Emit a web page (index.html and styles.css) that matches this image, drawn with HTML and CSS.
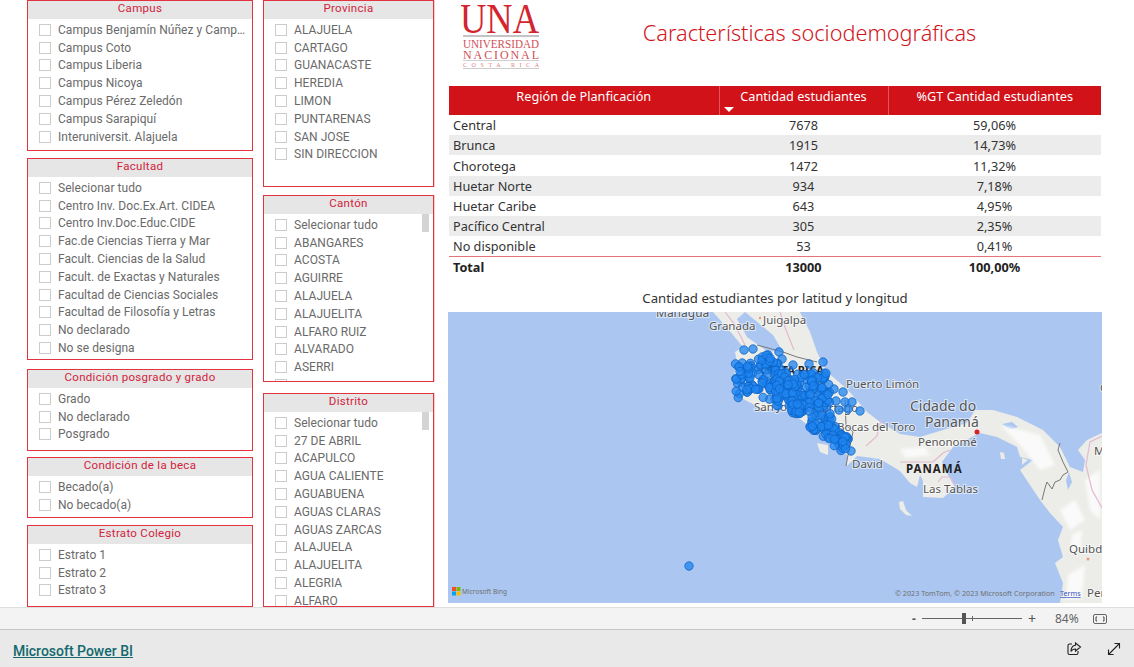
FILE: index.html
```html
<!DOCTYPE html>
<html lang="en">

<head>
  <meta charset="UTF-8">
  <title>Características sociodemográficas</title>
  <link rel="stylesheet" href="styles.css">
</head>

<body>
  <div class="report">
    <!-- Slicers, first column -->
    <div class="slicer-col col-left">
      <div class="slicer h-campus">
        <div class="slicer-title">Campus</div>
        <ul class="slicer-list">
          <li><span class="box"></span><span class="lbl">Campus Benjamín Núñez y Campus Omar Dengo</span></li>
          <li><span class="box"></span><span class="lbl">Campus Coto</span></li>
          <li><span class="box"></span><span class="lbl">Campus Liberia</span></li>
          <li><span class="box"></span><span class="lbl">Campus Nicoya</span></li>
          <li><span class="box"></span><span class="lbl">Campus Pérez Zeledón</span></li>
          <li><span class="box"></span><span class="lbl">Campus Sarapiquí</span></li>
          <li><span class="box"></span><span class="lbl">Interuniversit. Alajuela</span></li>
        </ul>
      </div>
      <div class="slicer h-facultad">
        <div class="slicer-title">Facultad</div>
        <ul class="slicer-list">
          <li><span class="box"></span><span class="lbl">Selecionar tudo</span></li>
          <li><span class="box"></span><span class="lbl">Centro Inv. Doc.Ex.Art. CIDEA</span></li>
          <li><span class="box"></span><span class="lbl">Centro Inv.Doc.Educ.CIDE</span></li>
          <li><span class="box"></span><span class="lbl">Fac.de Ciencias Tierra y Mar</span></li>
          <li><span class="box"></span><span class="lbl">Facult. Ciencias de la Salud</span></li>
          <li><span class="box"></span><span class="lbl">Facult. de Exactas y Naturales</span></li>
          <li><span class="box"></span><span class="lbl">Facultad de Ciencias Sociales</span></li>
          <li><span class="box"></span><span class="lbl">Facultad de Filosofía y Letras</span></li>
          <li><span class="box"></span><span class="lbl">No declarado</span></li>
          <li><span class="box"></span><span class="lbl">No se designa</span></li>
        </ul>
      </div>
      <div class="slicer h-posgrado">
        <div class="slicer-title">Condición posgrado y grado</div>
        <ul class="slicer-list">
          <li><span class="box"></span><span class="lbl">Grado</span></li>
          <li><span class="box"></span><span class="lbl">No declarado</span></li>
          <li><span class="box"></span><span class="lbl">Posgrado</span></li>
        </ul>
      </div>
      <div class="slicer h-beca">
        <div class="slicer-title">Condición de la beca</div>
        <ul class="slicer-list">
          <li><span class="box"></span><span class="lbl">Becado(a)</span></li>
          <li><span class="box"></span><span class="lbl">No becado(a)</span></li>
        </ul>
      </div>
      <div class="slicer h-estrato">
        <div class="slicer-title">Estrato Colegio</div>
        <ul class="slicer-list">
          <li><span class="box"></span><span class="lbl">Estrato 1</span></li>
          <li><span class="box"></span><span class="lbl">Estrato 2</span></li>
          <li><span class="box"></span><span class="lbl">Estrato 3</span></li>
        </ul>
      </div>
    </div>

    <!-- Slicers, second column -->
    <div class="slicer-col col-right">
      <div class="slicer h-provincia">
        <div class="slicer-title">Provincia</div>
        <ul class="slicer-list">
          <li><span class="box"></span><span class="lbl">ALAJUELA</span></li>
          <li><span class="box"></span><span class="lbl">CARTAGO</span></li>
          <li><span class="box"></span><span class="lbl">GUANACASTE</span></li>
          <li><span class="box"></span><span class="lbl">HEREDIA</span></li>
          <li><span class="box"></span><span class="lbl">LIMON</span></li>
          <li><span class="box"></span><span class="lbl">PUNTARENAS</span></li>
          <li><span class="box"></span><span class="lbl">SAN JOSE</span></li>
          <li><span class="box"></span><span class="lbl">SIN DIRECCION</span></li>
        </ul>
      </div>
      <div class="slicer h-canton">
        <div class="slicer-title">Cantón</div>
        <div class="scroll-thumb"></div>
        <ul class="slicer-list">
          <li><span class="box"></span><span class="lbl">Selecionar tudo</span></li>
          <li><span class="box"></span><span class="lbl">ABANGARES</span></li>
          <li><span class="box"></span><span class="lbl">ACOSTA</span></li>
          <li><span class="box"></span><span class="lbl">AGUIRRE</span></li>
          <li><span class="box"></span><span class="lbl">ALAJUELA</span></li>
          <li><span class="box"></span><span class="lbl">ALAJUELITA</span></li>
          <li><span class="box"></span><span class="lbl">ALFARO RUIZ</span></li>
          <li><span class="box"></span><span class="lbl">ALVARADO</span></li>
          <li><span class="box"></span><span class="lbl">ASERRI</span></li>
          <li><span class="box"></span></li>
        </ul>
      </div>
      <div class="slicer h-distrito">
        <div class="slicer-title">Distrito</div>
        <div class="scroll-thumb"></div>
        <ul class="slicer-list">
          <li><span class="box"></span><span class="lbl">Selecionar tudo</span></li>
          <li><span class="box"></span><span class="lbl">27 DE ABRIL</span></li>
          <li><span class="box"></span><span class="lbl">ACAPULCO</span></li>
          <li><span class="box"></span><span class="lbl">AGUA CALIENTE</span></li>
          <li><span class="box"></span><span class="lbl">AGUABUENA</span></li>
          <li><span class="box"></span><span class="lbl">AGUAS CLARAS</span></li>
          <li><span class="box"></span><span class="lbl">AGUAS ZARCAS</span></li>
          <li><span class="box"></span><span class="lbl">ALAJUELA</span></li>
          <li><span class="box"></span><span class="lbl">ALAJUELITA</span></li>
          <li><span class="box"></span><span class="lbl">ALEGRIA</span></li>
          <li><span class="box"></span><span class="lbl">ALFARO</span></li>
        </ul>
      </div>
    </div>

    <!-- Logo, title, table and map -->
    <div class="main">
      <div class="head">
        <svg class="logo" width="80" height="68" viewBox="0 0 80 68">
          <text x="-1" y="29" class="logo-una" textLength="79" lengthAdjust="spacingAndGlyphs">UNA</text>
          <rect x="2" y="31" width="76" height="2" fill="#c4c4c4"></rect>
          <text x="2" y="44" class="logo-uni" textLength="76" lengthAdjust="spacingAndGlyphs">UNIVERSIDAD</text>
          <text x="2" y="55" class="logo-uni" textLength="76">NACIONAL</text>
          <rect x="2" y="56" width="76" height="1" fill="#d0d0d0"></rect>
          <text x="2" y="63" class="logo-cr" textLength="76">COSTA RICA</text>
          <rect x="2" y="64" width="76" height="1" fill="#cccccc"></rect>
        </svg>
        <h1>Características sociodemográficas</h1>
      </div>

      <table class="region-table">
        <thead>
          <tr>
            <th class="c1">Región de Planficación</th>
            <th class="c2">Cantidad estudiantes<span class="sort-arrow"></span></th>
            <th class="c3">%GT Cantidad estudiantes</th>
          </tr>
        </thead>
        <tbody>
          <tr><td>Central</td><td>7678</td><td>59,06%</td></tr>
          <tr class="odd"><td>Brunca</td><td>1915</td><td>14,73%</td></tr>
          <tr class="tall"><td>Chorotega</td><td>1472</td><td>11,32%</td></tr>
          <tr class="odd"><td>Huetar Norte</td><td>934</td><td>7,18%</td></tr>
          <tr><td>Huetar Caribe</td><td>643</td><td>4,95%</td></tr>
          <tr class="odd"><td>Pacífico Central</td><td>305</td><td>2,35%</td></tr>
          <tr><td>No disponible</td><td>53</td><td>0,41%</td></tr>
        </tbody>
        <tfoot>
          <tr><td>Total</td><td>13000</td><td>100,00%</td></tr>
        </tfoot>
      </table>

      <div class="map-title">Cantidad estudiantes por latitud y longitud</div>

      <svg id="map" class="map" width="654" height="291" viewBox="448 312 654 291">
        <defs>
          <filter id="soft" x="-5%" y="-5%" width="110%" height="110%">
            <feGaussianBlur stdDeviation="0.7"></feGaussianBlur>
          </filter>
          <filter id="softer" x="-20%" y="-20%" width="140%" height="140%">
            <feGaussianBlur stdDeviation="1.6"></feGaussianBlur>
          </filter>
        </defs>
        <rect x="448" y="312" width="654" height="291" fill="#abc7f1"></rect>
        <!-- Land -->
        <g filter="url(#soft)">
          <path class="land" d="M713 312 L728 329 L743 347 L735 352 L737 362 L733 379 L743 399 L763 409 L787 409 L800 419 L813 429 L823 439 L833 445 L847 455 L847 466 L857 456 L880 459 L900 471 L910 483 L917 487 L920 475 L923 481 L923 497 L943 498 L955 487 L948 475 L942 462 L953 447 L972 437 L980 433 L997 437 L1017 447 L1020 457 L1033 460 L1020 470 L1040 500 L1050 513 L1063 527 L1058 540 L1063 557 L1055 563 L1063 583 L1060 603 L1102 603 L1102 433 L1087 440 L1078 450 L1085 460 L1083 472 L1070 467 L1060 447 L1043 430 L1017 417 L993 410 L975 410 L967 423 L943 430 L920 437 L900 434 L880 422 L867 412 L847 389 L827 372 L817 352 L810 332 L800 312 Z"></path>
          <path class="land" d="M817 443 L828 445 L828 455 L820 452 Z"></path>
          <path class="land" d="M899 502 L903 501 L906 510 L912 516 L906 515 L900 509 Z"></path>
          <path class="land" d="M1000 452 L1004 453 L1005 459 L1001 459 Z"></path>
          <path class="land" d="M1022 458 L1028 460 L1022 465 Z"></path>
          <path class="lake" d="M745 312 L773 335 L782 350 L768 352 L747 337 L737 319 Z"></path>
          <path class="lake" d="M1002 424 L1012 422 L1018 427 L1010 430 Z"></path>
          <path class="lake" d="M1069 472 L1072 482 L1068 490 L1066 480 Z"></path>
        </g>
        <!-- Lighter patches of high ground -->
        <g class="patch" filter="url(#softer)">
          <path d="M1060 510 L1075 500 L1085 520 L1070 530 Z"></path>
          <path d="M1068 575 L1085 565 L1082 598 L1066 600 Z"></path>
          <path d="M1085 480 L1100 470 L1100 520 L1090 510 Z"></path>
          <path d="M1072 535 L1082 530 L1080 552 L1070 550 Z"></path>
          <path d="M900 449 L925 447 L930 455 L905 458 Z"></path>
          <path d="M1000 425 L1040 435 L1055 465 L1040 470 L1020 445 Z"></path>
        </g>
        <!-- Province and country lines -->
        <path class="pink" d="M725 312 L735 325 L745 345 M780 312 L786 330 L794 350 M900 462 L917 462 L933 462 L943 453 L950 450 M938 482 L942 477 L950 477 L955 485 M1102 436 L1090 442 L1086 465 L1092 490 L1102 508 M866 446 L877 436 L881 420"></path>
        <path class="border" d="M1060 443 L1058 450 L1063 462 L1068 472 L1063 475 L1060 480 L1055 482 L1052 489 L1047 482 L1045 488 L1042 500"></path>
        <path class="border" d="M757 345 L783 352 L797 357 L817 362 M845 400 L846 425 L853 432 L848 455 L846 466"></path>
        <circle cx="977" cy="432" r="2.5" fill="#d8202a"></circle>
        <circle cx="1088" cy="559" r="1.5" fill="#ee9a80"></circle>
        <circle cx="760" cy="318" r="1.2" fill="#ee9a80"></circle>
        <!-- Labels -->
        <text class="lb lb-m" x="656" y="317">Managua</text>
        <text class="lb lb-s" x="709" y="330">Granada</text>
        <text class="lb lb-s" x="763" y="324">Juigalpa</text>
        <text class="lb-cr" x="760" y="374">COSTA RICA</text>
        <text class="lb lb-s" x="754" y="411">San José</text>
        <text class="lb lb-s" x="815" y="412">Cartago</text>
        <text class="lb lb-s" x="846" y="388">Puerto Limón</text>
        <text class="lb lb-s" x="837" y="431">Bocas del Toro</text>
        <text class="lb lb-s" x="852" y="468">David</text>
        <text class="lb lb-l" x="910" y="411">Cidade do</text>
        <text class="lb lb-l" x="925" y="427">Panamá</text>
        <text class="lb lb-s" x="918" y="446">Penonomé</text>
        <text class="lb-pa" x="906" y="473">PANAMÁ</text>
        <text class="lb lb-s" x="923" y="493">Las Tablas</text>
        <text class="lb lb-s" x="1069" y="553">Quibdó</text>
        <text class="lb lb-s" x="1087" y="597">Pereira</text>
        <text class="lb lb-s" x="1094" y="455">M</text>
        <text class="lb lb-s" x="1100" y="392">C</text>
        <!-- Bing mark and attribution -->
        <rect x="452" y="587" width="4" height="4" fill="#f25022"></rect>
        <rect x="456.500" y="587" width="4" height="4" fill="#7fba00"></rect>
        <rect x="452" y="591.500" width="4" height="4" fill="#00a4ef"></rect>
        <rect x="456.500" y="591.500" width="4" height="4" fill="#ffb900"></rect>
        <text class="attr attr-bing" x="462" y="594">Microsoft Bing</text>
        <text class="attr" x="895" y="596">© 2023 TomTom, © 2023 Microsoft Corporation</text>
        <text class="attr attr-link" x="1060" y="596">Terms</text>
        <g id="points"></g>
      </svg>
    </div>
  </div>

  <div class="toolbar">
    <span class="zoom-sign">-</span>
    <span class="zoom-track"><span class="zoom-tick"></span><span class="zoom-thumb"></span></span>
    <span class="zoom-sign plus">+</span>
    <span class="zoom-val">84%</span>
    <svg class="fit-icon" width="16" height="12" viewBox="0 0 16 12" fill="none" stroke="#666">
      <rect x="1.500" y="1.500" width="13" height="9" rx="1.500"></rect>
      <path d="M5 4H4V8H5M11 4H12V8H11" stroke="#444"></path>
    </svg>
  </div>

  <div class="footer">
    <a class="pbi-link" href="#">Microsoft Power BI</a>
    <svg class="foot-icon share" width="16" height="16" viewBox="0 0 16 16" fill="none" stroke="#222" stroke-width="1.100">
      <path d="M6 3H3.500A1.500 1.500 0 0 0 2 4.500V12A1.500 1.500 0 0 0 3.500 13.500H10.500A1.500 1.500 0 0 0 12 12V10"></path>
      <path d="M9.500 2L14.500 6L9.500 10V8C7.500 8 6 8.500 5 10.500C5 7.500 6.500 4.500 9.500 4.200Z"></path>
    </svg>
    <svg class="foot-icon" width="16" height="16" viewBox="0 0 16 16" fill="none" stroke="#222" stroke-width="1.100">
      <path d="M2.500 13.500L13.500 2.500M8.500 2.500H13.500V7.500M2.500 8.500V13.500H7.500"></path>
    </svg>
  </div>

  <script src="map.js"></script>
</body>

</html>
```

FILE: styles.css
```css
html,
body {
  margin: 0;
  padding: 0;
  height: 667px;
  overflow: hidden;
  background-color: #fff;
}

body {
  display: flex;
  flex-direction: column;
  font-family: "Noto Sans", sans-serif;
}

.report {
  height: 607px;
  display: flex;
  padding-left: 27px;
  box-sizing: border-box;
}

.slicer-col {
  display: flex;
  flex-direction: column;
}

.col-left {
  width: 226px;
  margin-right: 10px;
}

.col-right {
  width: 171px;
  margin-right: 14px;
}

.slicer {
  position: relative;
  box-sizing: border-box;
  border: 1px solid #e2333f;
  overflow: hidden;
  flex: none;
}

.col-right .slicer {
  box-shadow: 1px 0 0 #f7cdd0;
}

.h-campus { height: 151px; margin-bottom: 7px; }
.h-facultad { height: 202px; margin-bottom: 9px; }
.h-posgrado { height: 82px; margin-bottom: 6px; }
.h-beca { height: 61px; margin-bottom: 7px; }
.h-estrato { height: 82px; }
.h-provincia { height: 187px; margin-bottom: 8px; }
.h-canton { height: 187px; margin-bottom: 11px; }
.h-distrito { height: 214px; }

.slicer-title {
  height: 18px;
  line-height: 15px;
  background-color: #e6e6e6;
  color: #d2233c;
  text-align: center;
  font-family: Roboto, sans-serif;
  font-size: 11.5px;
  letter-spacing: 0.3px;
}

.slicer-list {
  list-style: none;
  margin: 0;
  padding: 1.900px 0 0 11px;
}

.slicer-list li {
  height: 17.800px;
  display: flex;
  align-items: center;
  font-family: Roboto, sans-serif;
  font-size: 12px;
  letter-spacing: 0.05px;
  color: #6a6a6a;
  white-space: nowrap;
}

.box {
  flex: none;
  width: 10px;
  height: 10px;
  border: 1px solid #ccc;
  margin-right: 7px;
}

.lbl {
  overflow: hidden;
  text-overflow: ellipsis;
  padding-right: 4px;
}

.scroll-thumb {
  position: absolute;
  right: 4px;
  top: 18px;
  width: 7px;
  height: 18px;
  background-color: #d4d4d4;
}

.main {
  width: 654px;
}

.head {
  height: 86px;
  position: relative;
}

.logo {
  position: absolute;
  left: 13px;
  top: 4px;
}

.logo-una {
  font-family: "Liberation Serif", serif;
  font-size: 42px;
  fill: #d4252f;
}

.logo-uni {
  font-family: "Liberation Serif", serif;
  font-size: 12px;
  fill: #cf4f57;
}

.logo-cr {
  font-family: "Liberation Serif", serif;
  font-size: 6px;
  fill: #dc7f84;
}

h1 {
  margin: 0;
  padding-top: 18px;
  padding-left: 69px;
  text-align: center;
  font-size: 21.700px;
  line-height: 30px;
  font-weight: 300;
  color: #d2141c;
}

.region-table {
  width: 652px;
  margin-left: 1px;
  border-collapse: collapse;
  table-layout: fixed;
  font-size: 12.700px;
  color: #333;
}

.region-table th {
  position: relative;
  height: 29px;
  padding: 0 0 10px;
  box-sizing: border-box;
  background-color: #d11219;
  border-right: 1px solid #e2555a;
  color: #fff;
  font-weight: 400;
  font-size: 12.700px;
}

.region-table th:last-child {
  border-right: 0;
}

.c1 { width: 270px; }
.c2 { width: 169px; }

.sort-arrow {
  position: absolute;
  left: 4px;
  bottom: 3px;
  border-left: 5px solid transparent;
  border-right: 5px solid transparent;
  border-top: 5px solid #fff;
}

.region-table td {
  height: 20px;
  padding: 0;
  text-align: center;
}

.region-table .tall td {
  height: 21px;
}

.region-table td:first-child {
  text-align: left;
  padding-left: 4px;
}

.region-table .odd td {
  background-color: #ececec;
}

.region-table tfoot td {
  border-top: 1px solid #e8727a;
  font-weight: 700;
  color: #222;
}

.map-title {
  height: 24px;
  margin-top: 11px;
  line-height: 20px;
  text-align: center;
  font-size: 13.200px;
  color: #333;
}

.map {
  display: block;
}

.land {
  fill: #ecece8;
}

.lake {
  fill: #abc7f1;
}

.patch {
  fill: #fafafa;
}

.pink {
  fill: none;
  stroke: #e3b9d2;
  stroke-width: 1.200;
}

.border {
  fill: none;
  stroke: #77787a;
  stroke-width: 1;
}

.lb {
  font-family: "Noto Sans", sans-serif;
  fill: #555;
  stroke: #fff;
  stroke-width: 2px;
  stroke-opacity: 0.6;
  paint-order: stroke;
}

.lb-s { font-size: 11.500px; }
.lb-m { font-size: 12px; }
.lb-l { font-size: 14px; }

.lb-cr {
  font-family: "Noto Sans", sans-serif;
  font-size: 11px;
  font-weight: 700;
  fill: #222;
}

.lb-pa {
  font-family: "Noto Sans", sans-serif;
  font-size: 11.500px;
  font-weight: 700;
  letter-spacing: 1px;
  fill: #222;
}

.attr {
  font-family: "Noto Sans", sans-serif;
  font-size: 7.200px;
  fill: #6f6f6f;
}

.attr-bing {
  font-size: 6.600px;
}

.attr-link {
  fill: #3a55c0;
  text-decoration: underline;
}

.toolbar {
  height: 23px;
  box-sizing: border-box;
  background-color: #f3f3f3;
  border-top: 1px solid #dedede;
  border-bottom: 1px solid #c6c6c6;
  display: flex;
  align-items: center;
  padding-left: 912px;
  font-size: 12px;
  color: #555;
}

.zoom-sign {
  width: 7px;
  font-weight: 700;
  color: #555;
}

.zoom-sign.plus {
  margin-left: 6px;
  font-weight: 400;
  font-size: 14px;
}

.zoom-track {
  position: relative;
  width: 100px;
  height: 1px;
  margin-left: 3px;
  background-color: #666;
}

.zoom-thumb {
  position: absolute;
  left: 40px;
  top: -5px;
  width: 4px;
  height: 11px;
  background-color: #555;
}

.zoom-tick {
  position: absolute;
  left: 50px;
  top: -2px;
  width: 1px;
  height: 5px;
  background-color: #666;
}

.zoom-val {
  margin-left: 20px;
  width: 35px;
  color: #666;
}

.fit-icon {
  margin-left: 2px;
}

.footer {
  height: 37px;
  box-sizing: border-box;
  background-color: #e9e9e9;
  display: flex;
  align-items: center;
  padding: 0 12px 0 13px;
}

.pbi-link {
  flex: 1;
  padding-top: 4px;
  color: #136a6e;
  font-size: 14px;
  font-weight: 500;
  font-family: Roboto, sans-serif;
}

.foot-icon {
  margin-left: 24px;
}
```

FILE: map.js
```js
// scatter of student locations, same layout on every load
var seed = 12345;

function rnd() {
  seed = (seed * 16807) % 2147483647;
  return seed / 2147483647;
}

// x, y, w, h, number of points
var clusters = [
  [735, 362, 45, 38, 90],
  [748, 355, 25, 8, 8],
  [775, 372, 55, 35, 130],
  [790, 400, 30, 14, 35],
  [810, 412, 22, 20, 35],
  [822, 425, 18, 14, 14],
  [830, 432, 12, 15, 10],
  [840, 436, 14, 16, 14]
];

var fixed = [
  [744, 350], [753, 349], [768, 355], [779, 352], [782, 359], [793, 365],
  [809, 364], [823, 362], [836, 401], [845, 402], [852, 402], [860, 411],
  [843, 392], [834, 389], [848, 409], [839, 410], [689, 566], [851, 451]
];

var group = document.getElementById('points');
var points = fixed.slice();

clusters.forEach(function (c) {
  for (var i = 0; i < c[4]; i++) {
    points.push([c[0] + rnd() * c[2], c[1] + rnd() * c[3]]);
  }
});

points.forEach(function (p) {
  var dot = document.createElementNS('http://www.w3.org/2000/svg', 'circle');
  dot.setAttribute('cx', p[0].toFixed(1));
  dot.setAttribute('cy', p[1].toFixed(1));
  dot.setAttribute('r', '4.2');
  dot.setAttribute('fill', '#1e84f0');
  dot.setAttribute('fill-opacity', '0.75');
  dot.setAttribute('stroke', '#0d63c6');
  dot.setAttribute('stroke-width', '0.8');
  group.appendChild(dot);
});
```
